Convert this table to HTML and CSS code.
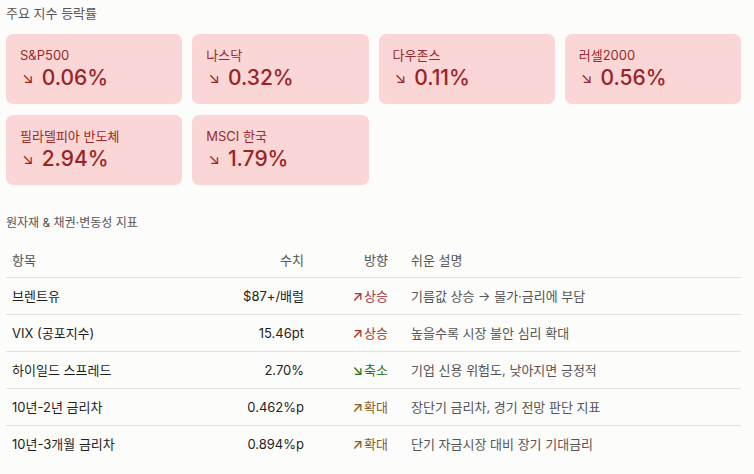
FILE: index.html
```html
<!DOCTYPE html>
<html lang="ko">
<head>
<meta charset="utf-8">
<link rel="stylesheet" href="styles.css">
</head>
<body>
<div class="page">
  <div class="section-title">주요 지수 등락률</div>
  <div class="cards">
    <div class="card"><div class="label">S&amp;P500</div><div class="value"><span class="arrow">↘</span>0.06%</div></div>
    <div class="card"><div class="label">나스닥</div><div class="value"><span class="arrow">↘</span>0.32%</div></div>
    <div class="card"><div class="label">다우존스</div><div class="value"><span class="arrow">↘</span>0.11%</div></div>
    <div class="card"><div class="label">러셀2000</div><div class="value"><span class="arrow">↘</span>0.56%</div></div>
    <div class="card"><div class="label">필라델피아 반도체</div><div class="value"><span class="arrow">↘</span>2.94%</div></div>
    <div class="card"><div class="label">MSCI 한국</div><div class="value"><span class="arrow">↘</span>1.79%</div></div>
  </div>
  <div class="section-title small">원자재 &amp; 채권·변동성 지표</div>
  <table class="tbl">
    <thead>
      <tr><th class="c-name">항목</th><th class="c-num">수치</th><th class="c-dir">방향</th><th class="c-desc">쉬운 설명</th></tr>
    </thead>
    <tbody>
      <tr><td class="c-name">브렌트유</td><td class="c-num">$87+/배럴</td><td class="c-dir up"><span class="darr">↗</span>상승</td><td class="c-desc">기름값 상승 → 물가·금리에 부담</td></tr>
      <tr><td class="c-name">VIX (공포지수)</td><td class="c-num">15.46pt</td><td class="c-dir up"><span class="darr">↗</span>상승</td><td class="c-desc">높을수록 시장 불안 심리 확대</td></tr>
      <tr><td class="c-name">하이일드 스프레드</td><td class="c-num">2.70%</td><td class="c-dir down"><span class="darr">↘</span>축소</td><td class="c-desc">기업 신용 위험도, 낮아지면 긍정적</td></tr>
      <tr><td class="c-name">10년-2년 금리차</td><td class="c-num">0.462%p</td><td class="c-dir wide"><span class="darr">↗</span>확대</td><td class="c-desc">장단기 금리차, 경기 전망 판단 지표</td></tr>
      <tr><td class="c-name">10년-3개월 금리차</td><td class="c-num">0.894%p</td><td class="c-dir wide"><span class="darr">↗</span>확대</td><td class="c-desc">단기 자금시장 대비 장기 기대금리</td></tr>
    </tbody>
  </table>
</div>
</body>
</html>
```

FILE: styles.css
```css
html, body {
  margin: 0;
  padding: 0;
  background: #fcfcfa;
}
body {
  font-family: Inter, "Noto Sans CJK KR", sans-serif;
  color: #222;
}
.page {
  padding: 5px 13px 0 6px;
}
.section-title {
  font-size: 13px;
  line-height: 17px;
  color: #555;
  margin: 0 0 12px 0;
}
.section-title.small {
  font-size: 12px;
  margin: 29px 0 11px 0;
}
.cards {
  display: grid;
  grid-template-columns: repeat(4, 1fr);
  gap: 11px 10px;
}
.card {
  background: #fbd6d6;
  border-radius: 7px;
  height: 70px;
  padding: 12px 14px 0 14px;
  box-sizing: border-box;
  color: #992a2a;
}
.label {
  font-size: 13px;
  line-height: 18px;
}
.value {
  font-size: 21px;
  line-height: 28px;
  font-weight: 500;
  color: #9a2326;
  display: flex;
  align-items: center;
}
.arrow {
  font-size: 15px;
  margin-left: 2px;
  margin-right: 8px;
  font-weight: 400;
}
.tbl {
  width: 100%;
  border-collapse: collapse;
  font-size: 13px;
}
.tbl th, .tbl td {
  line-height: 18px;
  padding: 9px 6px;
  border-bottom: 1px solid #e2e2df;
  font-weight: 400;
  text-align: left;
}
.tbl th {
  color: #555;
  padding-bottom: 8px;
}
.tbl tbody tr:last-child td {
  border-bottom: none;
}
.tbl .c-name { width: 180px; }
.tbl .c-num { text-align: right; width: 100px; }
.tbl .c-dir { text-align: right; width: 72px; padding-right: 10px; }
.tbl .c-desc { color: #555; padding-left: 13px; }
.tbl td.c-name, .tbl td.c-num { color: #1e1e1e; }
.darr { font-size: 14px; margin-right: 1px; font-weight: 500; }
.up { color: #a33232; }
.down { color: #1f7a1f; }
.wide { color: #8a5a1a; }
```
